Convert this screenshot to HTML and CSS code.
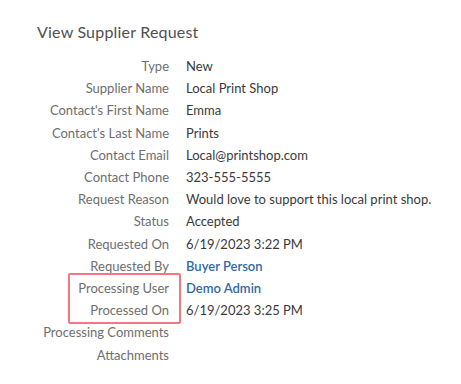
FILE: index.html
```html
<!DOCTYPE html>
<html>

<head>
	<title>View Supplier Request</title>
	<link rel="stylesheet" href="styles.css">
</head>

<body>
	<div class="container">
		<h1>View Supplier Request</h1>
		<div class="details">
			<div class="label">Type</div>
			<div class="value">New</div>
			<div class="label">Supplier Name</div>
			<div class="value">Local Print Shop</div>
			<div class="label">Contact's First Name</div>
			<div class="value">Emma</div>
			<div class="label">Contact's Last Name</div>
			<div class="value">Prints</div>
			<div class="label">Contact Email</div>
			<div class="value">Local@printshop.com</div>
			<div class="label">Contact Phone</div>
			<div class="value">323-555-5555</div>
			<div class="label">Request Reason</div>
			<div class="value">Would love to support this local print shop.</div>
			<div class="label">Status</div>
			<div class="value">Accepted</div>
			<div class="label">Requested On</div>
			<div class="value">6/19/2023 3:22 PM</div>
			<div class="label">Requested By</div>
			<div class="value"><a href="#">Buyer Person</a></div>
			<!-- khung đỏ đánh dấu 2 dòng xử lý -->
			<div class="label marked">Processing User</div>
			<div class="value"><a href="#">Demo Admin</a></div>
			<div class="label">Processed On</div>
			<div class="value">6/19/2023 3:25 PM</div>
			<div class="label">Processing Comments</div>
			<div class="value"></div>
			<div class="label">Attachments</div>
			<div class="value"></div>
		</div>
	</div>
</body>

</html>
```

FILE: styles.css
```css
body {
	font-family: Lato, "Open Sans", sans-serif;
	margin: 0;
	background-color: #fff;
	color: #444;
}

.container {
	padding-top: 22px;
}

h1 {
	font-size: 16px;
	font-weight: normal;
	color: #505050;
	margin: 0 0 13px 37px;
	line-height: 20px;
	letter-spacing: 0.2px;
}

.details {
	display: grid;
	grid-template-columns: 169px 1fr;
	column-gap: 17px;
	font-size: 13px;
	line-height: 22.2px;
}

.label {
	text-align: right;
	color: #6e6e6e;
	white-space: nowrap;
}

.value {
	color: #3a3a3a;
	white-space: nowrap;
}

.value a {
	color: #2f6aa3;
	text-decoration: none;
	font-weight: 600;
}

.marked {
	position: relative;
}

.marked::after {
	content: "";
	position: absolute;
	top: -4px;
	right: -12px;
	width: 109px;
	height: 47px;
	border: 2px solid #f27683;
	border-radius: 2px;
}
```
